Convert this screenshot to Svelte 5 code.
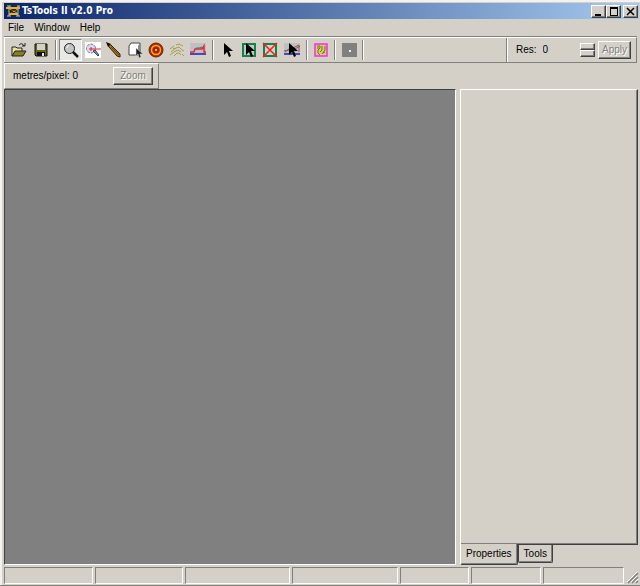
<script>
    const menus = ['File', 'Window', 'Help'];

    const groups = [
        { size: 'two', items: ['Open', 'Save'] },
        { size: 'seven', items: ['Zoom in', 'Zoom area', 'Draw', 'Select object', 'Target', 'Contours', 'Profile'] },
        { size: 'four', items: ['Pointer', 'Select area', 'Clear area', 'Edit profile'] },
        { size: 'one', items: ['Terrain map'] },
        { size: 'one', items: ['Point'] },
    ];

    const panes = [89, 88, 105, 106, 69, 70];

    let active = $state('Zoom in');
    let tab = $state('Properties');
</script>

{#snippet arrow()}
    <path d="M5 1v12l3-3 2 5 2-1-2-5h4z" fill="#000" />
{/snippet}

{#snippet icon(name)}
    <svg width="16" height="16" viewBox="0 0 16 16" aria-hidden="true">
        {#if name === 'Open'}
            <path d="M1 14V5h4l1 1h5v3" fill="#e8e4a0" stroke="#222" />
            <path d="M1 14l3-5h11l-3 5z" fill="#848020" stroke="#222" />
            <path d="M8 3q3-3 5 1M14 1v3h-3" fill="none" stroke="#222" />
        {:else if name === 'Save'}
            <path d="M2 2h12v12H3l-1-1z" fill="#67651c" stroke="#111" />
            <path d="M4 2h8v6H4z" fill="#d4d0c8" />
            <path d="M4 10h8v4H4z" fill="#111" />
            <path d="M9 11h2v3H9z" fill="#e8e8e8" />
        {:else if name === 'Zoom in'}
            <circle cx="6.500" cy="6.500" r="5" fill="#c0c6c6" stroke="#222" />
            <path d="M4 6q0-2 2-3" fill="none" stroke="#fff" />
            <path d="M10 10l5 5" stroke="#111" stroke-width="2.500" />
        {:else if name === 'Zoom area'}
            <path d="M0 0h16v16H0z" fill="#fff" />
            <circle cx="6" cy="6.500" r="4.500" fill="#d8dcec" stroke="#7470a8" stroke-dasharray="3 1" />
            <path d="M4 7h12M6 5v4" stroke="#f02030" />
            <path d="M8 9l2-1 4 5-1 1z" fill="#8890a8" stroke="#404858" />
        {:else if name === 'Draw'}
            <path d="M2 2l3 1 9 9v3l-3-1L3 5z" fill="#a87420" stroke="#332208" />
            <path d="M0 0l5 2-3 3z" fill="#111" />
            <path d="M5 5l8 8" stroke="#604010" />
        {:else if name === 'Select object'}
            <path d="M2 4l2-3h9v9l-2 3H2z" fill="#fff" stroke="#444" />
            <path d="M11 4l2-3v9l-2 3z" fill="#888" />
            <path d="M9 6v8l2-2 1 4 2-1-1-3h3z" fill="#222" stroke="#ddd" stroke-width=".5" />
        {:else if name === 'Target'}
            <circle cx="8" cy="8" r="7" fill="#c81c10" stroke="#5c2c08" />
            <circle cx="8" cy="8" r="4.500" fill="none" stroke="#e8b810" stroke-width="1.500" />
            <circle cx="8" cy="8" r="2" fill="#e8c010" stroke="#981808" stroke-width="1.500" />
        {:else if name === 'Contours'}
            <path d="M1 7l4-3M7 3l3-1 4 2M2 10l5-4 3-1 3 3 2 1M1 13l4-3 4-2 3 2M5 14l3-3h2l2 2M13 12l2 2M4 7l2-1" fill="none" stroke="#a59e48" />
        {:else if name === 'Profile'}
            <path d="M0 1h16v11H0z" fill="#c0c0c4" />
            <path d="M0 10h4M4 10l1-3h7l2-3v6h2" fill="none" stroke="#e02838" stroke-width="1.500" />
            <path d="M6 6h3l3-1" fill="none" stroke="#308850" />
            <path d="M0 12h16" stroke="#2020b0" stroke-width="1.500" />
        {:else if name === 'Pointer'}
            {@render arrow()}
        {:else if name === 'Select area'}
            <path d="M2 2h12v12H2z" fill="#c0c8c0" stroke="#128448" stroke-width="2" />
            {@render arrow()}
        {:else if name === 'Clear area'}
            <path d="M2 2h12v12H2z" fill="#d4d0c8" stroke="#128448" stroke-width="2" />
            <path d="M1 1l14 14M15 1L1 15" stroke="#f02020" stroke-width="1.500" />
        {:else if name === 'Edit profile'}
            <path d="M0 1h16v11H0z" fill="#c0c0c4" />
            <path d="M0 9l5-1 4-2 6-3v7" fill="none" stroke="#c03840" />
            <path d="M1 10l5-4 5 1 5-3" fill="none" stroke="#308850" />
            <path d="M0 12h16" stroke="#2020b0" stroke-width="1.500" />
            {@render arrow()}
        {:else if name === 'Terrain map'}
            <path d="M2 2h12v12H2z" fill="#d8cc78" stroke="#f030e0" stroke-width="1.500" />
            <path d="M4 4h3v2L5 8v3l2 2M9 4v4l-2 2M12 4v4l-3 4M4 6h2M10 11l2-1" fill="none" stroke="#77701c" />
        {:else if name === 'Point'}
            <path d="M1 1h15v14H1z" fill="#808080" />
            <path d="M8 8h2v2H8z" fill="#f0f0f0" />
        {/if}
    </svg>
{/snippet}

<div class="window">
    <header class="titlebar">
        <svg width="15" height="14" viewBox="0 0 15 14" aria-hidden="true">
            <path d="M1 2h4M3 2v10M1 12h4M11 2h3M12 2v10M10 12h4" stroke="#c8c4a8" fill="none" />
            <path d="M0 4h14M3 10h9" stroke="#f0b410" stroke-width="2" fill="none" />
            <path d="M3 10l9-5M4 5l7 4" stroke="#e0a810" fill="none" />
            <path d="M5 6h5M4 8h3" stroke="#181408" />
        </svg>
        <h1>TsTools II v2.0 Pro</h1>
        <div class="controls">
            <button class="raised" aria-label="Minimize">
                <svg width="10" height="9" viewBox="0 0 10 9"><path d="M1 7h6v2H1z" /></svg>
            </button>
            <button class="raised" aria-label="Maximize">
                <svg width="10" height="9" viewBox="0 0 10 9"><path d="M1 0h8v9H1zM2 2v6h6V2z" fill-rule="evenodd" /></svg>
            </button>
            <button class="raised close" aria-label="Close">
                <svg width="10" height="9" viewBox="0 0 10 9"><path d="M1 1l7 7M8 1L1 8" stroke="#000" stroke-width="1.500" /></svg>
            </button>
        </div>
    </header>

    <nav class="menubar">
        {#each menus as menu}
            <button>{menu}</button>
        {/each}
    </nav>

    <div class="bar">
        <div class="tools">
            {#each groups as group}
                <div class="group {group.size}">
                    {#each group.items as item}
                        <button
                            class:pressed={active === item}
                            aria-label={item}
                            aria-pressed={active === item}
                            onclick={() => (active = item)}
                        >
                            {@render icon(item)}
                        </button>
                    {/each}
                </div>
                <span class="sep"></span>
            {/each}
        </div>
        <div class="res">
            <label for="res">Res:</label>
            <input id="res" type="text" value="0" />
            <div class="spin">
                <button class="raised" aria-label="Increase"></button>
                <button class="raised" aria-label="Decrease"></button>
            </div>
            <button class="raised text-btn apply" disabled>Apply</button>
        </div>
    </div>

    <div class="bar scale">
        <span>metres/pixel: 0</span>
        <button class="raised text-btn zoom" disabled>Zoom</button>
    </div>

    <main>
        <div class="canvas"></div>
        <aside>
            <div class="sheet" role="tabpanel" aria-label={tab}></div>
            <div class="tabs" role="tablist">
                {#each ['Properties', 'Tools'] as name}
                    <button
                        role="tab"
                        aria-selected={tab === name}
                        class:selected={tab === name}
                        onclick={() => (tab = name)}
                    >{name}</button>
                {/each}
            </div>
        </aside>
    </main>

    <footer>
        {#each panes as width}
            <span class="pane" style="width: {width}px"></span>
        {/each}
        <span class="pane last"></span>
        <svg class="grip" width="13" height="13" viewBox="0 0 13 13" aria-hidden="true">
            <path d="M2 12L12 2M6 12l6-6M10 12l2-2" stroke="#808080" stroke-width="1.500" />
            <path d="M1 11L11 1M5 11l6-6M9 11l3-3" stroke="#fff" />
        </svg>
    </footer>
</div>

<style>
    :global(body) {
        margin: 0;
        background: #d4d0c8;
    }

    .window {
        box-sizing: border-box;
        min-height: 100vh;
        display: flex;
        flex-direction: column;
        padding: 3px 1px 1px 4px;
        background: #d4d0c8;
        border-bottom: 1px solid #808080;
        box-shadow: inset 2px 2px #f4f2ee;
        font: 10px/14px "Liberation Sans", Arial, sans-serif;
        color: #000;
    }

    button,
    input {
        box-sizing: border-box;
        margin: 0;
        padding: 0;
        border: 0;
        background: none;
        font: inherit;
        color: inherit;
    }

    svg {
        display: block;
        flex: none;
    }

    .raised {
        background: #d4d0c8;
        border: 1px solid;
        border-color: #fff #404040 #404040 #fff;
        box-shadow: inset -1px -1px #808080;
    }

    .titlebar {
        display: flex;
        align-items: center;
        gap: 1px;
        height: 16px;
        padding: 0 1px 0 2px;
        background: linear-gradient(to right, #0a246a, #a6caf0);
    }

    h1 {
        flex: 1;
        margin: 0;
        font: bold 10px/16px "DejaVu Sans Condensed", "DejaVu Sans", sans-serif;
        color: #fff;
    }

    .controls {
        display: flex;
    }

    .controls button {
        width: 15px;
        height: 13px;
        padding: 1px 2px;
    }

    .controls .close {
        margin-left: 2px;
    }

    .menubar {
        display: flex;
        gap: 10px;
        height: 18px;
        padding-left: 4px;
    }

    .bar {
        display: flex;
        box-sizing: border-box;
        height: 26px;
        margin-right: 2px;
        border: 1px solid;
        border-color: #fff #808080 #808080 #fff;
        box-shadow: 0 -1px #808080;
    }

    .tools {
        flex: 1;
        display: flex;
        align-items: center;
        padding-left: 3px;
        border-right: 1px solid #808080;
    }

    .group {
        display: flex;
    }

    .two {
        width: 44px;
    }

    .seven {
        width: 150px;
    }

    .four {
        width: 87px;
    }

    .one {
        width: 21px;
    }

    .group button {
        flex: 1;
        display: flex;
        align-items: center;
        justify-content: center;
        height: 22px;
    }

    .group .pressed {
        background: #e9e7e3;
        border: 1px solid;
        border-color: #808080 #fff #fff #808080;
    }

    .sep {
        width: 1px;
        height: 20px;
        margin: 0 3px;
        background: #808080;
        box-shadow: 1px 0 #fff;
    }

    .res {
        display: flex;
        align-items: center;
        box-sizing: border-box;
        width: 129px;
        padding: 0 5px 0 8px;
        border-left: 1px solid #fff;
    }

    .res input {
        flex: 1;
        min-width: 0;
        margin-left: 6px;
    }

    .spin {
        display: flex;
        flex-direction: column;
        margin-right: 3px;
    }

    .spin button {
        width: 15px;
        height: 7px;
    }

    .text-btn:disabled {
        color: #808080;
        text-shadow: 1px 1px #fff;
    }

    .apply {
        width: 33px;
        height: 18px;
    }

    .scale {
        align-self: flex-start;
        align-items: center;
        justify-content: space-between;
        width: 155px;
        padding: 0 5px 0 8px;
    }

    .zoom {
        width: 40px;
        height: 18px;
    }

    main {
        flex: 1;
        display: flex;
        gap: 4px;
        padding-right: 1px;
    }

    .canvas {
        flex: 1;
        background: #808080;
        border: 1px solid;
        border-color: #404040 #fff #fff #404040;
    }

    aside {
        display: flex;
        flex-direction: column;
        width: 178px;
    }

    .sheet {
        flex: 1;
        border: 1px solid;
        border-color: #fff #404040 #404040 #fff;
        box-shadow: inset -1px -1px #808080;
    }

    .tabs {
        display: flex;
        align-items: flex-start;
        height: 20px;
    }

    .tabs button {
        height: 18px;
        padding: 0 5px;
        border: 1px solid #404040;
        border-top: 0;
        border-radius: 0 0 2px 2px;
        box-shadow: inset -1px -1px #808080;
    }

    .tabs .selected {
        height: 21px;
        margin-top: -1px;
        background: #d4d0c8;
        border-left-color: #fff;
    }

    footer {
        display: flex;
        gap: 2px;
        height: 17px;
        padding-top: 2px;
    }

    .pane {
        box-sizing: border-box;
        border: 1px solid;
        border-color: #808080 #fff #fff #808080;
    }

    .last {
        flex: 1;
    }

    .grip {
        align-self: flex-end;
    }
</style>
